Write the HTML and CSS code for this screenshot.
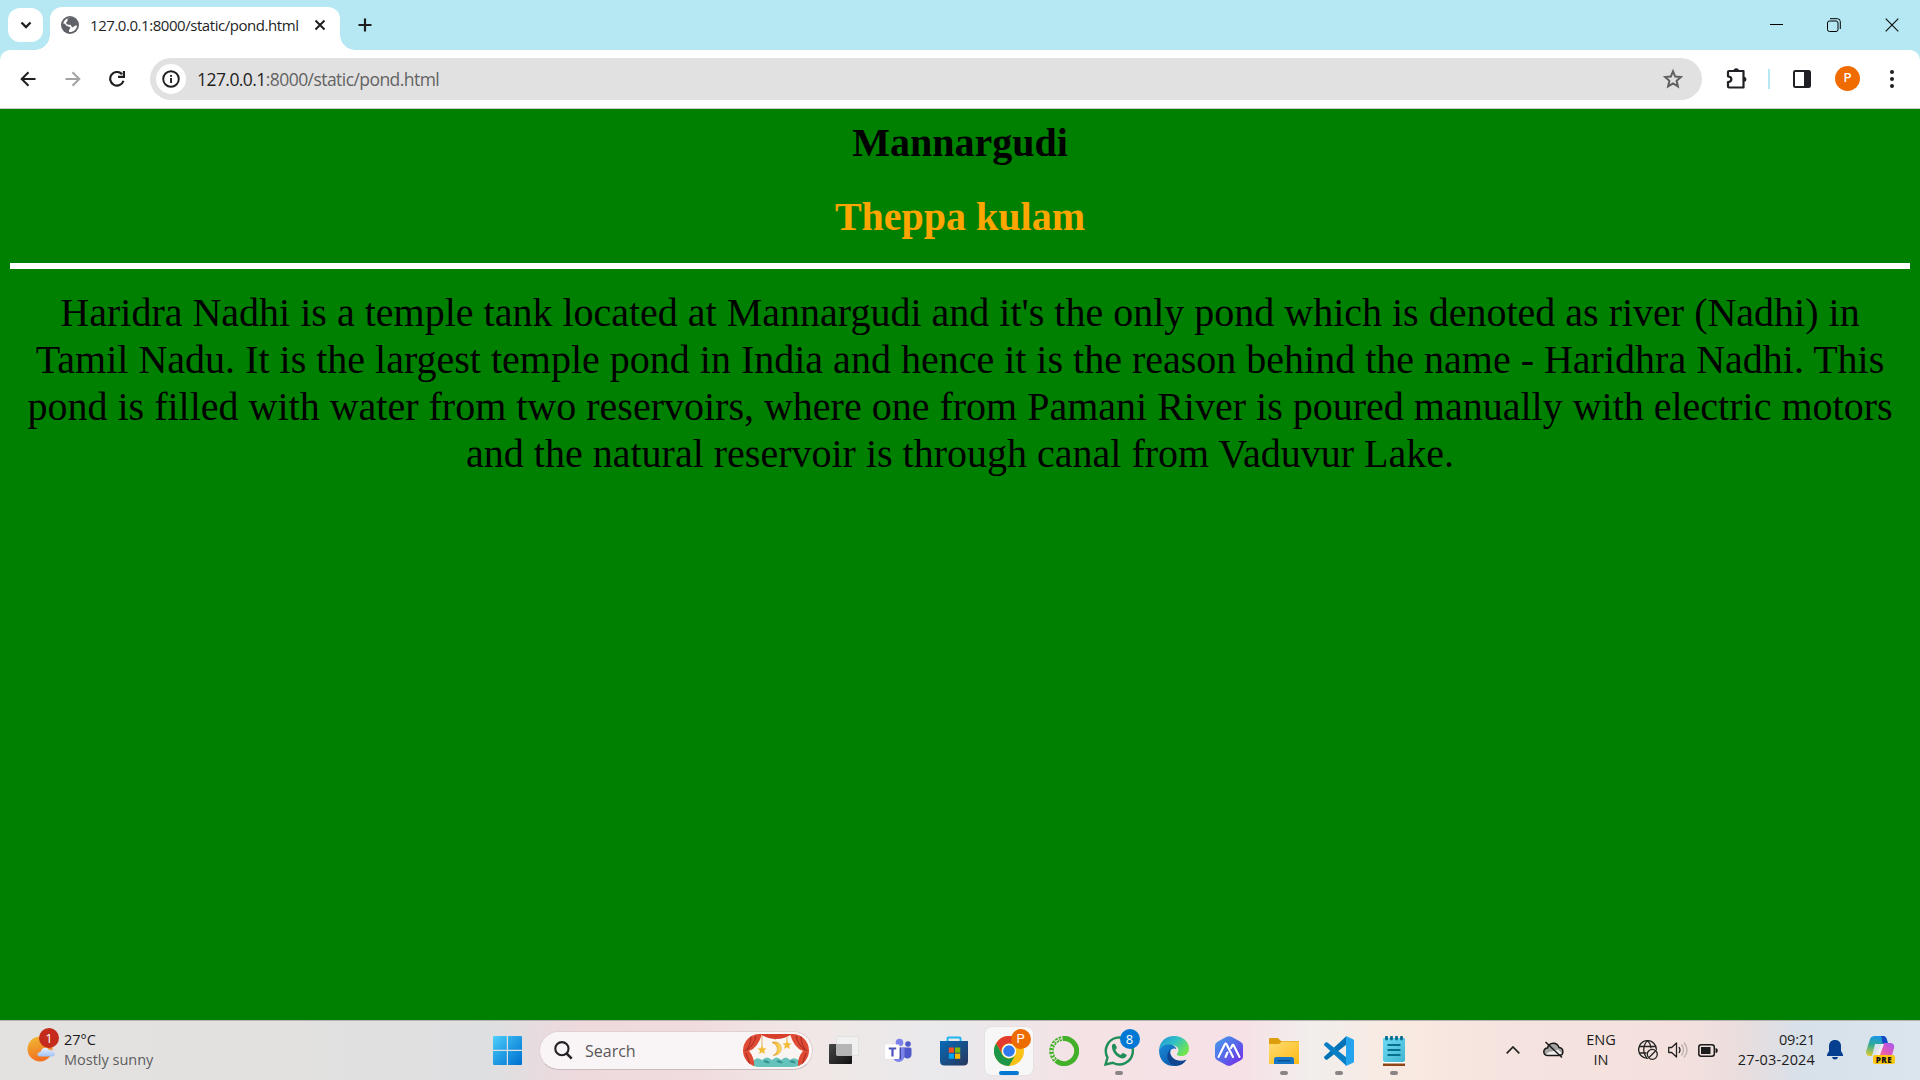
FILE: index.html
```html
<!DOCTYPE html>
<html lang="en">
<head>
<meta charset="utf-8">
<title>127.0.0.1:8000/static/pond.html</title>
<link rel="stylesheet" href="styles.css">
</head>
<body>
<div class="screen">
  <header class="tabstrip">
    <div class="tab-search"><svg width="12" height="8" viewBox="0 0 12 8"><path d="M1.5 1.5 6 6l4.500-4.500" fill="none" stroke="#1f1f1f" stroke-width="2.300"/></svg></div>
    <div class="tab">
      <svg class="tab-globe" width="18" height="18" viewBox="0 0 18 18"><circle cx="9" cy="9" r="9" fill="#5f6368"/><path d="M10 1.800C7 1.800 6 3 6.500 4.500 7 5.500 5.200 5.500 5.200 7c0 1.800 2 1.600 3.800 1.800 1.800.300 1 2.400 2.500 2.400 1.500 0 1.200-1.700 4.600-1.700C15.600 13.500 12.500 16 9 16c-.900 0-1-.500-1-1.500 0-1.600 1.500-1.200 1.300-2.700C9.100 10.500 6 10.800 5 9.300 4.200 8.200 3.500 7.500 2.200 7.600 3 4 6 1.700 10 1.800z" fill="#fff"/><path d="M9.500 3.500c2-.600 3 .500 2.500 1.500-.500 1-2 .500-2 1.700" fill="none" stroke="#5f6368" stroke-width="2"/></svg>
      <span class="tab-title">127.0.0.1:8000/static/pond.html</span>
      <svg class="tab-close" width="12" height="12" viewBox="0 0 12 12"><path d="M1.500 1.500l9 9M10.500 1.500l-9 9" stroke="#1f1f1f" stroke-width="2"/></svg>
    </div>
    <svg class="tab-new" width="14" height="14" viewBox="0 0 14 14"><path d="M7 .500v13M.500 7h13" stroke="#1f1f1f" stroke-width="2.200"/></svg>
    <div class="window-controls">
      <svg width="13" height="14" viewBox="0 0 13 14"><path d="M0 6.500h13" stroke="#000"/></svg>
      <svg width="14" height="14" viewBox="0 0 14 14" fill="none" stroke="#000"><rect x=".500" y="3" width="10.500" height="10.500" rx="2"/><path d="M3 .700h7.300a3 3 0 0 1 3 3v7.300"/></svg>
      <svg width="14" height="14" viewBox="0 0 14 14"><path d="M.700.700l12.600 12.600M13.300.700.700 13.300" stroke="#111" stroke-width="1.200"/></svg>
    </div>
  </header>

  <nav class="toolbar">
    <svg class="back" width="16" height="16" viewBox="0 0 16 16"><path d="M15.500 8H2M8.500 1.200 1.700 8l6.800 6.800" fill="none" stroke="#1f1f1f" stroke-width="2"/></svg>
    <svg class="forward" width="16" height="16" viewBox="0 0 16 16"><path d="M.500 8H14M7.500 1.200 14.300 8l-6.800 6.800" fill="none" stroke="#a3a3a3" stroke-width="2"/></svg>
    <svg class="reload" width="16" height="16" viewBox="0 0 16 16"><path d="M14.500 9.800A6.800 6.800 0 1 1 13 3.200" fill="none" stroke="#1f1f1f" stroke-width="2.200"/><path d="M13.800 0H16v7H9V4.800h4.800z" fill="#1f1f1f"/></svg>
    <div class="omnibox">
      <div class="site-info"><svg width="18" height="18" viewBox="0 0 18 18"><circle cx="9" cy="9" r="7.800" fill="none" stroke="#1f1f1f" stroke-width="1.900"/><path d="M8.100 8h1.900v5H8.100zM8.100 4.900h1.900v1.900H8.100z" fill="#1f1f1f"/></svg></div>
      <span class="url"><span class="host">127.0.0.1</span>:8000/static/pond.html</span>
      <svg class="star" width="20" height="20" viewBox="0 0 20 20"><path d="M10 2.300l2.200 5.300 5.700.500-4.300 3.700 1.300 5.600-4.900-3-4.900 3 1.300-5.600-4.300-3.700 5.700-.500z" fill="none" stroke="#5f6062" stroke-width="2"/></svg>
    </div>
    <svg class="extensions" width="22" height="22" viewBox="0 0 22 22"><path d="M3 3h14.500v16.500H3q-1 0-1-1v-4.300c4.500-.500 4.500-5.400 0-5.900V4q0-1 1-1z" fill="none" stroke="#1f2023" stroke-width="2.200" stroke-linejoin="round"/><path d="M7.500 3a2.700 2.700 0 0 1 5.400 0zM18 8.800a2.500 2.500 0 0 1 0 5z" fill="#1f2023"/></svg>
    <div class="divider"></div>
    <svg class="side-panel" width="18" height="18" viewBox="0 0 18 18"><rect x="1" y="1" width="16" height="16" rx="1.300" fill="#fff" stroke="#1f2023" stroke-width="2"/><path d="M11 1h6v16h-6z" fill="#1f2023"/></svg>
    <div class="avatar">P</div>
    <svg class="kebab" width="4" height="18" viewBox="0 0 4 18" fill="#1f1f1f"><circle cx="2" cy="2" r="2"/><circle cx="2" cy="9" r="2"/><circle cx="2" cy="16" r="2"/></svg>
  </nav>

  <main class="page">
    <h1 class="heading">Mannargudi</h1>
    <h1 class="heading subheading">Theppa kulam</h1>
    <hr class="rule">
    <p class="description">Haridra Nadhi is a temple tank located at Mannargudi and it's the only pond which is denoted as river (Nadhi) in<br>Tamil Nadu. It is the largest temple pond in India and hence it is the reason behind the name - Haridhra Nadhi. This<br>pond is filled with water from two reservoirs, where one from Pamani River is poured manually with electric motors<br>and the natural reservoir is through canal from Vaduvur Lake.</p>
  </main>

  <footer class="taskbar">
    <div class="weather">
      <div class="weather-icon">
        <svg width="30" height="30" viewBox="0 0 30 30"><defs><linearGradient id="sun" x1="0" y1="0" x2=".300" y2="1"><stop offset="0" stop-color="#f0bd35"/><stop offset="1" stop-color="#f2701f"/></linearGradient><linearGradient id="cloud" x1="0" y1="0" x2="0" y2="1"><stop offset="0" stop-color="#e9f2ff"/><stop offset="1" stop-color="#9fc1f5"/></linearGradient></defs><circle cx="13" cy="13" r="12.500" fill="url(#sun)"/><path d="M13 20.500c-3.500 0-3.500-4.500.500-4.500 1-5 7-5.500 8.500-2 2-.700 3.200 0 3.500 1.500 3.500.500 3.200 5-.500 5z" fill="url(#cloud)"/></svg>
        <span class="badge alert">1</span>
      </div>
      <div class="weather-text"><div>27°C</div><div class="muted">Mostly sunny</div></div>
    </div>

    <svg class="start" width="29" height="29" viewBox="0 0 29 29"><defs><linearGradient id="win" x1="0" y1="0" x2="1" y2="1"><stop offset="0" stop-color="#4fd0fb"/><stop offset=".500" stop-color="#209ce4"/><stop offset="1" stop-color="#006fd0"/></linearGradient></defs><path d="M1 0h12.800v13.800H0V1q0-1 1-1zM15 0h13q1 0 1 1v12.800H15zM0 15h13.800v14H1q-1 0-1-1zM15 15h14v13q0 1-1 1H15z" fill="url(#win)"/></svg>

    <div class="search">
      <svg width="19" height="19" viewBox="0 0 19 19"><circle cx="7.900" cy="7.700" r="6.600" fill="none" stroke="#242126" stroke-width="2.100"/><path d="M12.500 12.400l5.200 5.200" stroke="#242126" stroke-width="2.600"/></svg>
      <span class="search-label">Search</span>
      <svg class="stage" width="66" height="33" viewBox="0 0 66 33"><defs><clipPath id="pill"><rect width="66" height="33" rx="16.500"/></clipPath><linearGradient id="moon" x1="0" x2="1"><stop offset="0" stop-color="#eaa51a"/><stop offset="1" stop-color="#ffe16b"/></linearGradient></defs><g clip-path="url(#pill)"><path d="M0 0h66v33H0z" fill="#faf5f3"/><path d="M10 27q4-5 9-1 5-5 10 0 5-5 9 0 5-5 9 0 4-4 10 1v6H10z" fill="#65c3bb"/><path d="M20 27q5-2 7 2-4 1-7-2zM33 27q5-2 7 2-4 1-7-2zM46 27q5-2 7 2-4 1-7-2z" fill="#36938f"/><path d="M19 2v10M44 3v4M32 2v4" stroke="#d9b36a"/><path d="M29 8.500c10-3.500 14 12 1 13 5-2 7-10-1-13z" fill="url(#moon)" stroke="#d69822" stroke-width=".600"/><path d="M19 11l1.300 3.200 3.300.200-2.500 2.200.800 3.300-2.900-1.700-2.900 1.700.800-3.300-2.500-2.200 3.300-.200zM44 6l1.300 3.200 3.300.200-2.500 2.200.800 3.300-2.900-1.700-2.900 1.700.800-3.300-2.500-2.200 3.300-.200z" fill="#f2bd36"/><path d="M0 0h19Q15 14 6 17q6 7 5 16H0zM66 0H47q4 14 13 17-6 7-5 16h11z" fill="#df4a34"/><path d="M17 0h32q-7 5-16 5T17 0z" fill="#d83e2c"/><path d="M8 2Q8 12 2 17M13 2q-2 9-9 14M58 2q0 10 6 15M53 2q2 9 9 14M3 19l4 12M63 19l-4 12" fill="none" stroke="#a52922"/></g></svg>
    </div>

    <div class="apps">
      <div class="app"><svg width="30" height="29" viewBox="0 0 30 29"><defs><linearGradient id="tv" x1="0" y1="0" x2="1" y2="1"><stop offset="0" stop-color="#474747"/><stop offset="1" stop-color="#111"/></linearGradient><linearGradient id="tvw" x1="0" y1="1" x2="1" y2="0"><stop offset="0" stop-color="#c4c4c4"/><stop offset=".500" stop-color="#e2e2e2"/><stop offset="1" stop-color="#fff"/></linearGradient></defs><rect y="8" width="23" height="20" rx="1" fill="url(#tv)"/><rect x="7.500" y=".500" width="22" height="19" rx="1" fill="#f0f0f0" stroke="#d5d5d5" stroke-width=".500"/><path d="M7.500 8H23v11.500H7.500z" fill="#b5b5b5"/></svg></div>
      <div class="app"><svg width="30" height="30" viewBox="0 0 30 30"><circle cx="15.500" cy="6.500" r="3.800" fill="#7b83eb"/><circle cx="24" cy="8" r="2.800" fill="#5059c9"/><path d="M18 11.500h8q1.500 0 1.500 1.500v5.500c0 5-7 5-8.500 1z" fill="#5059c9"/><path d="M9 11.500h10.500q1 0 1 1V19c0 9-11.500 9-11.500 1z" fill="#7b83eb"/><path d="M9 20h6.500V11.500H17V23h-7z" fill="#40489f"/><rect x="1" y="8.500" width="14.500" height="14.500" rx="1" fill="#fff"/><path d="M4.800 11.500h7.400v2H9.600v7H7.400v-7H4.800z" fill="#4b53bc"/></svg></div>
      <div class="app"><svg width="30" height="30" viewBox="0 0 30 30"><defs><linearGradient id="store" x1="0" y1="0" x2="1" y2="1"><stop offset="0" stop-color="#066bb8"/><stop offset="1" stop-color="#29355c"/></linearGradient></defs><path d="M8.500 6V2.500Q8.500 1.500 9.500 1.500h11q1 0 1 1V6" fill="none" stroke="#20b6ef" stroke-width="2"/><path d="M1 5h28v20q0 4.500-4.500 4.500h-19Q1 29.500 1 25z" fill="url(#store)"/><path d="M9.800 11.500h5.200v5.200H9.800z" fill="#f25022"/><path d="M16 11.500h5.200v5.200H16z" fill="#7fba00"/><path d="M9.800 17.600h5.200v5.200H9.800z" fill="#00a4ef"/><path d="M16 17.600h5.200v5.200H16z" fill="#ffb900"/></svg></div>
      <div class="app active"><svg width="30" height="30" viewBox="0 0 30 30"><circle cx="15" cy="15" r="15" fill="#fbc116"/><path d="M2 7.500A15 15 0 0 1 28 7.500H15a7.500 7.500 0 0 0-6.500 11.300z" fill="#e33b2e"/><path d="M2 7.500A15 15 0 0 0 15 30l6.500-11.300A7.500 7.500 0 0 1 8.500 18.700z" fill="#1e9648"/><circle cx="15" cy="15" r="7.200" fill="#fff"/><circle cx="15" cy="15" r="5.800" fill="#3179ed"/></svg><span class="badge profile">P</span></div>
      <div class="app"><svg width="30" height="30" viewBox="0 0 30 30" fill="none"><path d="M13.500 2.500A12.600 12.600 0 1 1 7 24.700" stroke="#43b02a" stroke-width="5"/><path d="M12.500 2.700A12.600 12.600 0 0 0 6.500 24.300" stroke="#43b02a" stroke-width="4.500" stroke-dasharray="2.500 1"/><path d="M12.500 2.700A12.600 12.600 0 0 0 6.500 24.300" stroke="#f5e4e7" stroke-width="1.300" stroke-dasharray="2 2"/></svg></div>
      <div class="app running"><svg width="30" height="30" viewBox="0 0 30 30"><path d="M1.500 28.500l2-7A13.500 13.500 0 1 1 8.800 26.800z" fill="none" stroke="#1f8e59" stroke-width="2.400"/><path d="M8 9.500C8.500 7.500 11 7 11.500 8.500l1.200 2.700c.500 1-.900 2-1.300 2.700 1.300 2.700 3.300 4.200 5.500 5 .700-.900 1.600-2.200 2.600-1.700l2.800 1.400c1.500.900-1.300 4-3.800 4C13 22 7 15 8 9.500z" fill="#1f8e59"/></svg><span class="badge count">8</span></div>
      <div class="app"><svg width="30" height="30" viewBox="0 0 30 30"><defs><linearGradient id="edgeTop" x1="0" y1="0" x2="1" y2=".600"><stop offset="0" stop-color="#2091d8"/><stop offset=".500" stop-color="#31bfc8"/><stop offset="1" stop-color="#72e64c"/></linearGradient><linearGradient id="edgeLow" x1="0" y1="0" x2="1" y2="1"><stop offset="0" stop-color="#188bda"/><stop offset="1" stop-color="#0a4a9b"/></linearGradient></defs><path d="M0 14C1 4 8 0 15 0c9 0 15 6 15 12.500 0 5-3.500 7.500-7.500 7.500-4 0-5.500-1.200-4-3 3-4-1-8-6-8C7 9 2 11 0 14z" fill="url(#edgeTop)"/><path d="M0 14c2-4 7-6 11-5.500 3.500.400 6 2.500 6.300 4.500C13 11 10 15 12 19c2 5 9 8 15 5-3 5-8 6-12 6C6 30 0 24 0 14z" fill="url(#edgeLow)"/><path d="M11 13.500c-6 7-1 16 7 16 4-.300 7-2 9.500-6C20 27 9 23 11 13.500z" fill="#10468f"/></svg></div>
      <div class="app"><svg width="28" height="30" viewBox="0 0 28 30"><defs><linearGradient id="hex" x1="0" y1="0" x2="1" y2="1"><stop offset="0" stop-color="#43a0ea"/><stop offset=".550" stop-color="#5a62ea"/><stop offset="1" stop-color="#7b22e8"/></linearGradient></defs><path d="M11.500.800q2.500-1.300 5 0l9 5Q28 7.200 28 9.500v11q0 2.300-2.500 3.700l-9 5q-2.500 1.300-5 0l-9-5Q0 22.800 0 20.500v-11q0-2.300 2.500-3.700z" fill="url(#hex)"/><path d="M3.500 21l6.200-12.500q1-1.700 2 0L18 21M10.500 21l2-4.500M16 12l1.200-2.500q.800-1.300 1.600 0L24.500 21" fill="none" stroke="#fff" stroke-width="2.100" stroke-linecap="round"/></svg></div>
      <div class="app running"><svg width="30" height="30" viewBox="0 0 30 30"><defs><linearGradient id="folder" x1="0" y1="0" x2="1" y2="1"><stop offset="0" stop-color="#ffdc73"/><stop offset="1" stop-color="#fdba16"/></linearGradient></defs><path d="M0 3q0-1 1-1h8l3 3h17q1 0 1 1v10H0z" fill="#dd9d0d"/><path d="M0 8h10l3-2.500h17V28H0z" fill="url(#folder)"/><path d="M5 28v-4.500q0-2.500 2.500-2.500h15q2.500 0 2.500 2.500V28z" fill="#1675c5"/><path d="M8.500 24.700h13" stroke="#0b4b86" stroke-width="1.200"/></svg></div>
      <div class="app running"><svg width="30" height="30" viewBox="0 0 30 30"><path d="M22.500 0v8.500L3.500 23.500q-1 .700-2 0L.400 22.200q-.800-.900 0-1.700z" fill="#0073b7"/><path d="M22.500 30v-8.500L3.500 6.500q-1-.700-2 0L.400 7.800q-.800.900 0 1.700z" fill="#087fc5"/><path d="M22 0l7 3.300q1 .500 1 1.500v20.400q0 1-1 1.500L22 30q-.500-.500 0-1.500v-27z" fill="#24a3ee"/></svg></div>
      <div class="app running"><svg width="24" height="30" viewBox="0 0 24 30"><defs><linearGradient id="note" x1="0" y1="0" x2="1" y2="1"><stop offset="0" stop-color="#6bdbf1"/><stop offset="1" stop-color="#42b5d2"/></linearGradient></defs><path d="M1 27h22v3H1z" fill="#924514"/><path d="M1 25h22v2.500H1z" fill="#fff"/><path d="M1 3q0-1 1-1h20q1 0 1 1v21q0 2-2 2H3q-2 0-2-2z" fill="url(#note)"/><path d="M5.500 9h13M5.500 14h13M5.500 19h13" stroke="#08708f" stroke-width="2"/><path d="M4.500 1v2M9.500 1v2M14.500 1v2M19.500 1v2" stroke="#076a8c" stroke-width="2.800" stroke-linecap="round"/></svg></div>
    </div>

    <div class="tray">
      <svg class="chevron" width="14" height="8" viewBox="0 0 14 8"><path d="M.700 7.300 7 1l6.300 6.300" fill="none" stroke="#222" stroke-width="1.700"/></svg>
      <svg class="onedrive" width="21" height="18" viewBox="0 0 21 18"><path d="M5 14.500C-.500 14.500-.500 7 4.500 7 6 1 14 .500 16 6.500c5 .500 5.500 8-.500 8z" fill="#a5a2a1" stroke="#191919" stroke-width="1.500"/><path d="M3 13.500q2-3 6-3l6-2 4 4-3 1z" fill="#eee"/><path d="M2.500 1l16.500 15.500" stroke="#191919" stroke-width="1.500"/></svg>
      <div class="language"><div>ENG</div><div>IN</div></div>
      <svg class="network" width="20" height="20" viewBox="0 0 20 20" fill="none" stroke="#222" stroke-width="1.300"><circle cx="9.500" cy="9.500" r="8.900"/><path d="M1 6.500h17M1 13h9M9.500.600c-5 5-5 13 0 17.800M9.500.600c2.500 2.500 3.500 5 3.500 8"/><circle cx="14.300" cy="14.300" r="6" fill="#f3e2de" stroke="none"/><circle cx="14.300" cy="14.300" r="5"/><path d="M11 17.500l6.500-6.500"/></svg>
      <svg class="volume" width="20" height="18" viewBox="0 0 20 18" fill="none" stroke="#222" stroke-width="1.300"><path d="M.700 6.500h3L8.500 2v14l-4.800-4.500h-3z" stroke-linejoin="round"/><path d="M11 6q2 3 0 6"/><path d="M13.500 3.500q4 5.500 0 11M16 1.500q6 7.500 0 15" stroke="#b9aeac"/></svg>
      <svg class="battery" width="20" height="13" viewBox="0 0 20 13"><rect x=".800" y=".800" width="15.500" height="11.400" rx="2.500" fill="none" stroke="#1c1c1c" stroke-width="1.500"/><rect x="3" y="3" width="9.500" height="7" fill="#1c1c1c"/><path d="M17.500 4q2.300 0 2.300 2.500T17.500 9z" fill="#1c1c1c"/></svg>
      <div class="clock"><div class="time">09:21</div><div class="date">27-03-2024</div></div>
      <svg class="bell" width="16" height="20" viewBox="0 0 16 20" fill="#063f8f"><path d="M8 0c4 0 6 2.700 6 6v5l2 3.500V16H0v-1.500L2 11V6c0-3.300 2-6 6-6zM5 17h6q-.500 2.500-3 2.500T5 17z"/></svg>
      <div class="copilot"><svg width="29" height="24" viewBox="0 0 29 24"><defs><linearGradient id="cpl" x1=".500" y1="0" x2=".300" y2="1"><stop offset="0" stop-color="#1695e8"/><stop offset=".500" stop-color="#37ad91"/><stop offset="1" stop-color="#d8cb32"/></linearGradient><linearGradient id="cpr" x1="1" y1="0" x2="0" y2="1"><stop offset="0" stop-color="#a655f3"/><stop offset=".500" stop-color="#e55bb5"/><stop offset="1" stop-color="#ff9565"/></linearGradient></defs><path d="M9 0h8q3 0 4 4l1 4H9L6 20H3q-4-1-2.500-6L4 3q1-3 5-3z" fill="url(#cpl)"/><path d="M14 0h3q3 0 4 4l1 4h-4q-2 0-2-4t-2-4z" fill="#1749c5"/><path d="M18 7h7q4 1 3 5l-3 11H7q3 0 4-4z" fill="url(#cpr)"/><path d="M16 8h2l-4 11-6 1q2 0 3-4z" fill="#f4ecf4"/></svg><span class="pre">PRE</span></div>
    </div>
  </footer>
</div>
</body>
</html>
```
FILE: styles.css
```css
* { box-sizing: border-box; }
body { margin: 0; }
svg { display: block; flex: none; }
.screen {
  width: 1920px;
  height: 1080px;
  display: flex;
  flex-direction: column;
  overflow: hidden;
  background: #b5e8f3;
  font-family: "Open Sans", "Noto Sans", sans-serif;
}

/* Tab strip */
.tabstrip { height: 50px; flex: none; display: flex; padding-left: 8px; }
.tab-search {
  width: 35px; height: 34px; margin-top: 8px;
  display: flex; align-items: center; justify-content: center;
  background: #fff; border-radius: 12px;
}
.tab {
  position: relative;
  width: 290px; height: 43px; margin: 7px 0 0 7px; padding: 0 14px 7px 11px;
  display: flex; align-items: center;
  background: #fff; border-radius: 12px 12px 0 0;
}
.tab::before, .tab::after {
  content: ""; position: absolute; bottom: 0; width: 15px; height: 15px;
}
.tab::before { left: -15px; background: radial-gradient(circle at 0 0, transparent 14.500px, #fff 15px); }
.tab::after { right: -15px; background: radial-gradient(circle at 100% 0, transparent 14.500px, #fff 15px); }
.tab-title { margin-left: 11px; font-size: 15px; letter-spacing: -0.450px; color: #1f1f1f; white-space: nowrap; }
.tab-close { margin-left: auto; }
.tab-new { margin: 18px 0 0 18px; }
.window-controls { margin: 18px 21px 0 auto; display: flex; gap: 44px; }

/* Toolbar */
.toolbar {
  height: 59px; flex: none; display: flex; align-items: center; padding-left: 20px; padding-bottom: 1px;
  background: #fff; border-bottom: 1px solid #c9cdc9; border-radius: 10px 10px 0 0;
}
.forward { margin-left: 29px; }
.reload { margin-left: 28px; }
.omnibox {
  width: 1552px; height: 42px; margin-left: 25px; padding: 0 19px 0 6px;
  display: flex; align-items: center;
  background: #e1e1e1; border-radius: 21px;
}
.site-info {
  width: 30px; height: 30px; display: flex; align-items: center; justify-content: center;
  background: #fff; border-radius: 50%;
}
.url { margin-left: 11px; font-size: 17.500px; letter-spacing: -0.560px; color: #636363; white-space: nowrap; }
.host { color: #1f1f1f; }
.star { margin-left: auto; }
.extensions { margin-left: 24px; }
.divider { width: 2px; height: 20px; margin-left: 20px; background: #b5e8f3; }
.side-panel { margin-left: 23px; }
.avatar {
  width: 25px; height: 25px; margin-left: 24px; flex: none;
  border-radius: 50%; background: #f16c00; color: #fff;
  font: 500 12px/25px Roboto, sans-serif; text-align: center;
}
.kebab { margin-left: 30px; }

/* Web page */
.page {
  flex: 1; min-height: 0; padding: 10px 10px 0;
  background: #008000; color: #000;
  font-family: "Liberation Serif", "Times New Roman", serif;
  text-align: center;
}
.heading { margin: 0 0 27px; font-size: 40px; line-height: 47px; font-weight: bold; }
.subheading { color: #ffa500; margin-bottom: 23px; }
.rule { height: 6px; margin: 0 0 20px; border: 0; background: #fff; }
.description { margin: 0; font-size: 40px; line-height: 47px; white-space: nowrap; }

/* Taskbar */
.taskbar {
  height: 60px; flex: none; display: flex; align-items: center;
  border-top: 1px solid #b8b4b2;
  color: #1c1c1c;
  background: linear-gradient(90deg, #e3e2e1 0, #e2e1e0 300px, #dedfe1 490px, #eed9dd 580px, #f0dcdf 700px, #f0e8e6 810px, #e9e9ec 950px, #f5e2e5 1090px, #f6e2e6 1250px, #f1eeec 1310px, #f9eae1 1400px, #f5e3df 1500px, #f4e1de 1680px, #eadddd 1740px, #d8e1e9 1800px, #dae5ed 1920px);
}
.weather { display: flex; width: 493px; padding: 0 0 2px 27px; }
.weather-icon { position: relative; width: 30px; height: 30px; margin-top: 6px; }
.weather-text { margin-left: 7px; font-size: 14.500px; line-height: 20px; }
.muted { color: #5e5d5d; }
.badge {
  position: absolute; width: 20px; height: 20px; border-radius: 50%;
  color: #fff; font-size: 13px; line-height: 20px; text-align: center;
}
.alert { left: 12px; top: -8px; background: #c42b1c; }
.search {
  width: 274px; height: 39px; margin-left: 17px; padding: 0 3px 0 14px;
  display: flex; align-items: center;
  background: #f9f5f6; border: 1px solid #e2d0d3; border-bottom-color: #c9babd; border-radius: 20px;
}
.search-label { margin-left: 12px; font-size: 16px; letter-spacing: 0; color: #5b5759; }
.stage { margin-left: auto; }
.apps { display: flex; margin-left: 3px; }
.app {
  position: relative; width: 48px; height: 48px; margin: 0 3.500px;
  display: flex; align-items: center; justify-content: center;
}
.active { background: #f8f7f7; border-radius: 6px; box-shadow: 0 0 1px #bbb; }
.active::after, .running::after {
  content: ""; position: absolute; bottom: 0; left: 50%; width: 8px; height: 4px;
  transform: translateX(-50%); border-radius: 2px; background: #8b8485;
}
.active::after { width: 20px; background: #0078d4; }
.profile { left: 26px; top: 2px; background: #ed6c02; font-family: Roboto, sans-serif; }
.count { left: 25px; top: 2px; background: #0078d4; }
.tray { flex: 1; display: flex; align-items: center; padding: 0 0 1px 85px; }
.onedrive { margin-left: 23px; }
.language { width: 50px; margin-left: 12px; text-align: center; font-size: 14.500px; line-height: 20px; letter-spacing: 0; }
.network { margin-left: 12px; }
.volume { margin-left: 10px; }
.battery { margin-left: 10px; }
.clock { width: 97px; text-align: right; font-size: 14.500px; line-height: 20px; }
.time { letter-spacing: -0.200px; }
.date { letter-spacing: 0.150px; }
.bell { margin-left: 12px; }
.copilot { position: relative; width: 29px; height: 28px; margin-left: 23px; }
.pre {
  position: absolute; left: 7px; bottom: 0; width: 22px; height: 9px;
  background: #fdc713; border-radius: 2px; color: #111;
  font-size: 8px; line-height: 9px; font-weight: 800; text-align: center; letter-spacing: 0.500px;
}
```
